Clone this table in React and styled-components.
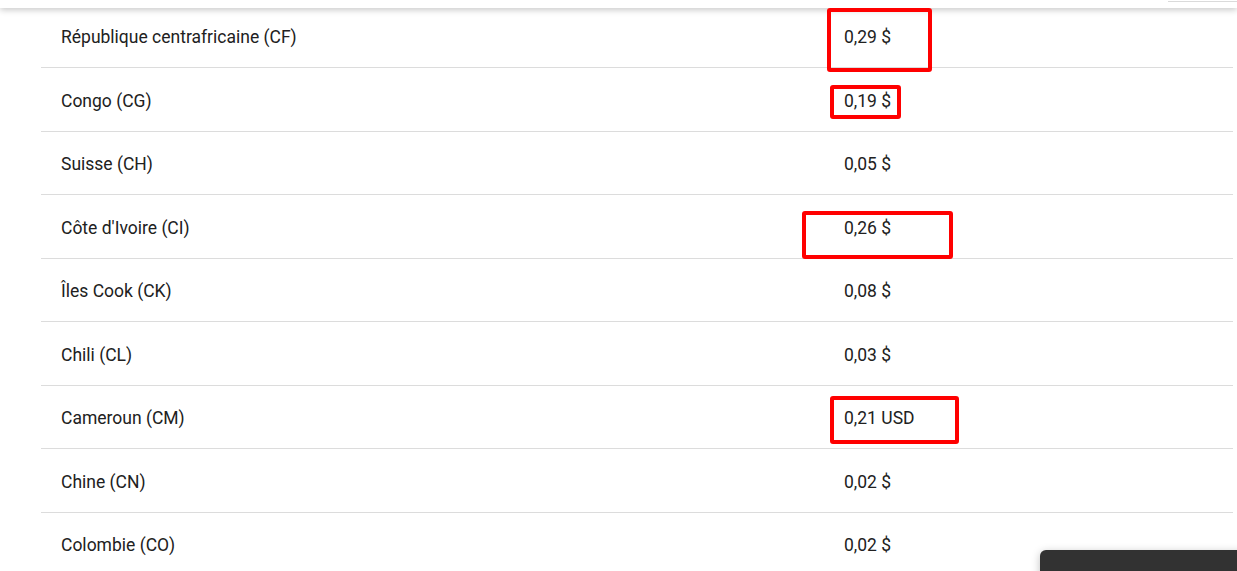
import styled, { createGlobalStyle } from 'styled-components'

const rates = [
  { country: 'République centrafricaine (CF)', price: '0,29 $' },
  { country: 'Congo (CG)', price: '0,19 $' },
  { country: 'Suisse (CH)', price: '0,05 $' },
  { country: "Côte d'Ivoire (CI)", price: '0,26 $' },
  { country: 'Îles Cook (CK)', price: '0,08 $' },
  { country: 'Chili (CL)', price: '0,03 $' },
  { country: 'Cameroun (CM)', price: '0,21 USD' },
  { country: 'Chine (CN)', price: '0,02 $' },
  { country: 'Colombie (CO)', price: '0,02 $' },
]

// red annotation boxes drawn over the screenshot
const marks = [
  { left: 786, top: 3.5, width: 105, height: 64 },
  { left: 789, top: 80.5, width: 71, height: 34 },
  { left: 761, top: 206.5, width: 151, height: 48 },
  { left: 789, top: 391.5, width: 129, height: 48 },
]

const GlobalStyle = createGlobalStyle`
  html, body {
    margin: 0;
    padding: 0;
    background: #fff;
    overflow: hidden;
  }
  body {
    font-family: Roboto, 'Liberation Sans', sans-serif;
    color: #212121;
  }
`

export default function App() {
  return (
    <>
      <GlobalStyle />
      <Page>
        <TopBar>
          <SearchEdge />
        </TopBar>
        <Table>
          {rates.map((r) => (
            <Row key={r.country}>
              <Cell>{r.country}</Cell>
              <Cell>{r.price}</Cell>
            </Row>
          ))}
          {marks.map((m, i) => (
            <Mark
              key={i}
              style={{ left: m.left, top: m.top, width: m.width, height: m.height }}
            />
          ))}
        </Table>
        <Snackbar />
      </Page>
    </>
  )
}

const Page = styled.div`
  position: relative;
  width: 1237px;
  height: 571px;
  overflow: hidden;
`

const TopBar = styled.div`
  position: absolute;
  top: 0;
  left: 0;
  right: 0;
  height: 8px;
  background: #fff;
  box-shadow: 0 2px 6px rgba(0, 0, 0, 0.22);
  z-index: 2;
`

const SearchEdge = styled.div`
  position: absolute;
  right: 0;
  top: 0;
  width: 69px;
  height: 1px;
  border-bottom: 1px solid #dadada;
`

const Table = styled.div`
  position: relative;
  margin: 4.5px 0 0 41px;
  width: 1192px;
`

const Row = styled.div`
  display: grid;
  grid-template-columns: 783px 1fr;
  align-items: center;
  height: 63.5px;
  box-sizing: border-box;
  border-bottom: 1px solid #dcdcdc;
`

const Cell = styled.div`
  padding: 3px 20px 0;
  font-size: 17.5px;
  line-height: 22px;
  color: #212121;
`

const Mark = styled.div`
  position: absolute;
  box-sizing: border-box;
  border: 4px solid #ff0000;
  border-radius: 3px;
  z-index: 3;
`

const Snackbar = styled.div`
  position: absolute;
  left: 1040px;
  top: 550px;
  width: 240px;
  height: 60px;
  background: #323232;
  border-radius: 6px;
  box-shadow: 0 2px 8px rgba(0, 0, 0, 0.25);
`
